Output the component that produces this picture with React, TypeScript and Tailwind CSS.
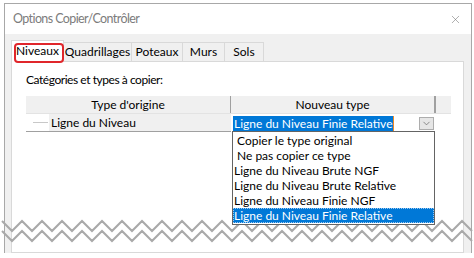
import { X, ChevronDown } from "lucide-react";

const tabs = [
  { label: "Quadrillages", w: "w-[68px]" },
  { label: "Poteaux", w: "w-[51px]" },
  { label: "Murs", w: "w-[42px]" },
  { label: "Sols", w: "w-[39px]" },
];

const options = [
  { label: "Copier le type original", indent: true },
  { label: "Ne pas copier ce type", indent: true },
  { label: "Ligne du Niveau Brute NGF" },
  { label: "Ligne du Niveau Brute Relative" },
  { label: "Ligne du Niveau Finie NGF" },
  { label: "Ligne du Niveau Finie Relative", selected: true },
];

function Zigzag() {
  const top: string[] = [];
  const bottom: string[] = [];
  for (let i = 0; i <= 47; i++) {
    const x = 2 + i * 10;
    const up = i % 2 === 0;
    top.push(`${x},${up ? 221 : 231}`);
    bottom.push(`${x},${up ? 231 : 241}`);
  }
  return (
    <svg className="absolute left-0 top-0 pointer-events-none" width="474" height="258">
      <polyline points={top.join(" ")} fill="none" stroke="#a9a9a9" strokeWidth="2" />
      <polyline points={bottom.join(" ")} fill="none" stroke="#a9a9a9" strokeWidth="2" />
    </svg>
  );
}

export default function App() {
  return (
    <div className="relative w-[474px] h-[258px] bg-white pt-[3px] pl-[4px] overflow-hidden font-['Lato',sans-serif] text-[12px] text-black">
      <div className="w-[468px] h-[250px] border-x border-t border-[#a8a8a8] bg-[#f0f0f0] flex flex-col">
        {/* title bar */}
        <div className="h-[30px] bg-white flex items-center justify-between pl-[8px] pr-[9px] shrink-0">
          <span className="text-[12.5px] tracking-[-0.6px] text-[#7c7c7c]">Options Copier/Contrôler</span>
          <X size={13} strokeWidth={1} className="text-[#6e6e6e]" />
        </div>

        <div className="flex-1 flex flex-col pl-[6px] pr-[7px] pt-[6px]">
          {/* tabs */}
          <div className="flex items-end h-[21px] relative z-10">
            <div className="relative w-[53px] h-[22px] -mb-px bg-white border-x border-t border-[#d9d9d9] flex items-center justify-center pb-[1px]">
              Niveaux
              <div className="absolute left-[2px] top-[2px] w-[50px] h-[20px] border-2 border-[#e0262b] rounded-[4px]" />
            </div>
            {tabs.map((t) => (
              <div
                key={t.label}
                className={`${t.w} h-[19px] bg-[#f0f0f0] border-r border-t border-[#d9d9d9] flex items-center justify-center`}
              >
                {t.label}
              </div>
            ))}
          </div>

          {/* panel */}
          <div className="flex-1 bg-white border border-[#d9d9d9] pl-[14px] pt-[10px] relative">
            <div className="h-[16px] leading-[16px] tracking-[-0.45px]">Catégories et types à copier:</div>

            <div className="mt-[8px] w-[425px]">
              <div className="flex h-[18px] bg-[#f0f0f0] border-b border-[#e3e3e3]">
                <div className="w-[205px] flex items-center justify-center border-r border-[#a0a0a0]">Type d'origine</div>
                <div className="w-[205px] flex items-center justify-center border-r-2 border-[#a0a0a0]">Nouveau type</div>
                <div className="flex-1" />
              </div>
              <div className="flex h-[18px]">
                <div className="w-[205px] flex items-center border-b border-[#a0a0a0]">
                  <div className="w-[23px] flex items-center pl-[7px]">
                    <div className="w-[15px] h-px bg-[#c8c8c8]" />
                  </div>
                  <div className="flex-1 h-full bg-[#f0f0f0] flex items-center pl-[2px]">Ligne du Niveau</div>
                </div>
                <div className="w-[205px] flex items-center pl-[2px] pr-[2px]">
                  <span className="bg-[#0078d7] text-white leading-[15px] px-[1px] border-r border-[#f08a24]">
                    Ligne du Niveau Finie Relative
                  </span>
                  <div className="ml-auto w-[15px] h-[13px] bg-[#e6e6e6] border border-[#adadad] flex items-center justify-center">
                    <ChevronDown size={11} strokeWidth={1.5} className="text-[#606060]" />
                  </div>
                </div>
              </div>
            </div>

            {/* dropdown list */}
            <div className="absolute left-[220px] top-[69px] w-[203px] border border-[#646464] bg-white py-px z-20">
              {options.map((o) => (
                <div
                  key={o.label}
                  className={`h-[15px] leading-[15px] ${o.indent ? "pl-[4px]" : "pl-[1px]"} ${
                    o.selected ? "bg-[#0078d7] text-white outline-1 outline-dotted outline-[#9cc8f0] -outline-offset-1" : ""
                  }`}
                >
                  {o.label}
                </div>
              ))}
            </div>
          </div>
        </div>
      </div>
      <Zigzag />
    </div>
  );
}
